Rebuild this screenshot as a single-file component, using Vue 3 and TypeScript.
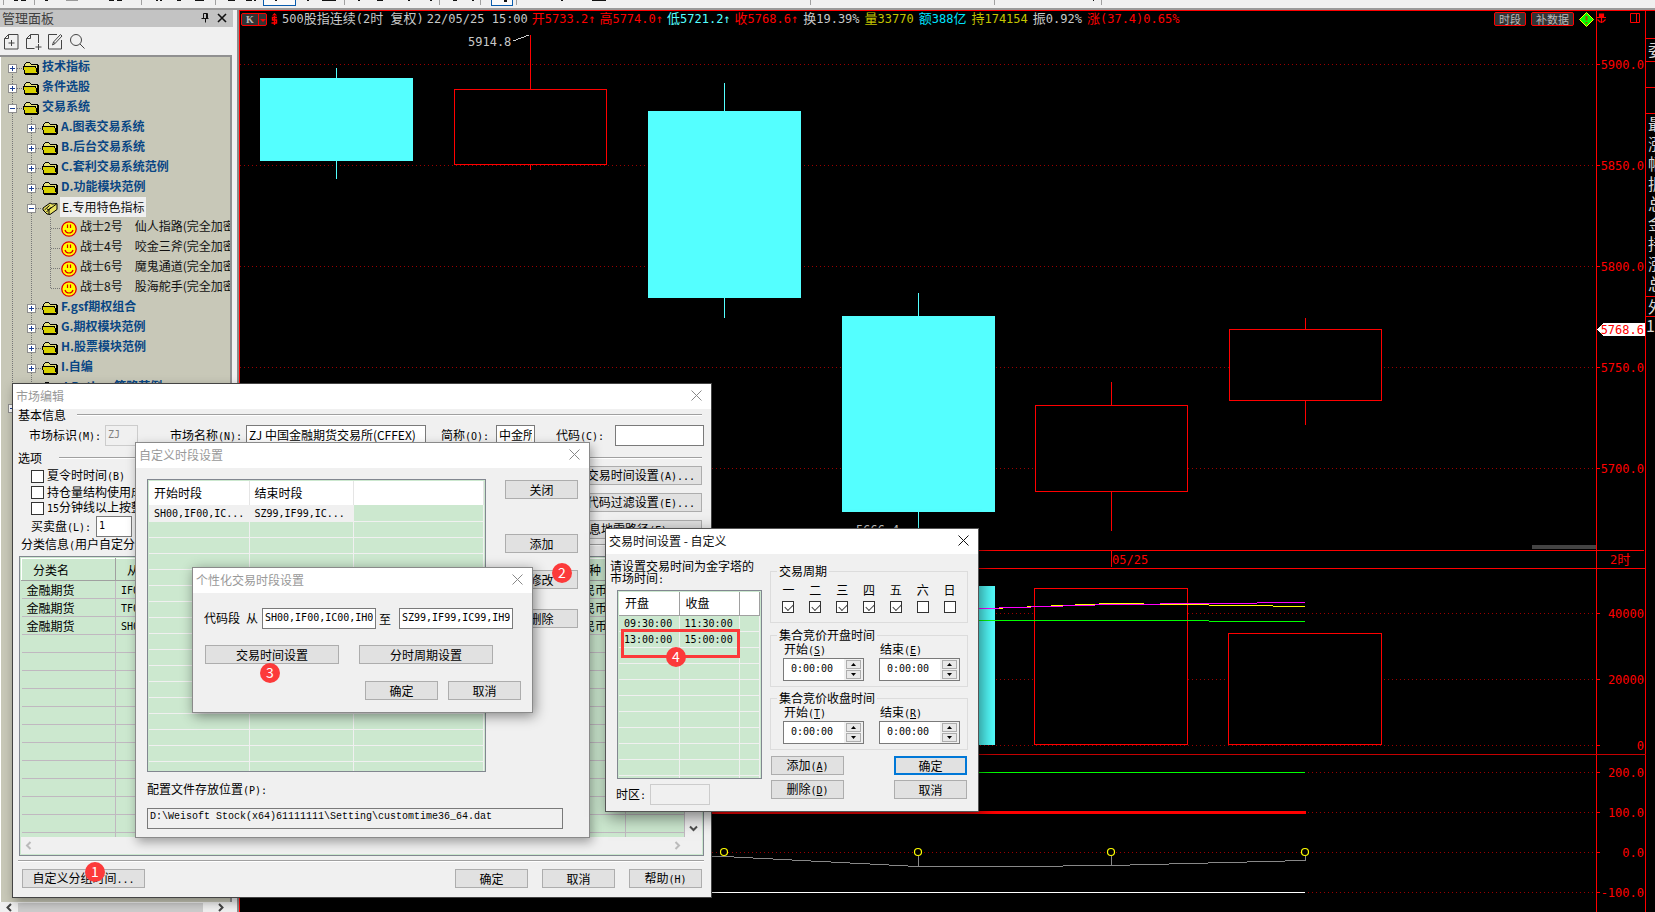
<script setup lang="ts">
import { h, type VNode } from 'vue'

/* Label text: Latin runs go to the half-width face, "&X" underlines the access key. */
const T = (props: { t: string }) => {
  const parts = props.t.match(/[\x20-\x7e↑]+|[^\x20-\x7e↑]+/g) ?? []
  return h(
    'span',
    { class: 'mix' },
    parts.map((part): VNode | string => {
      if (!/^[\x20-\x7e↑]/.test(part)) return part
      const bits = part.split(/(&[A-Z])/).filter(Boolean)
      return h('span', { class: 'half' }, bits.map((b) => (b[0] === '&' ? h('u', b[1]) : b)))
    }),
  )
}

interface Node {
  level: number
  kind: 'folder' | 'open' | 'leaf'
  sign?: '+' | '-'
  text: string
  extra?: string
  last?: boolean
}
const tree: Node[] = [
  { level: 0, kind: 'folder', sign: '+', text: '技术指标' },
  { level: 0, kind: 'folder', sign: '+', text: '条件选股' },
  { level: 0, kind: 'folder', sign: '-', text: '交易系统' },
  { level: 1, kind: 'folder', sign: '+', text: 'A.图表交易系统' },
  { level: 1, kind: 'folder', sign: '+', text: 'B.后台交易系统' },
  { level: 1, kind: 'folder', sign: '+', text: 'C.套利交易系统范例' },
  { level: 1, kind: 'folder', sign: '+', text: 'D.功能模块范例' },
  { level: 1, kind: 'open', sign: '-', text: 'E.专用特色指标' },
  { level: 2, kind: 'leaf', text: '战士2号', extra: '仙人指路(完全加密)' },
  { level: 2, kind: 'leaf', text: '战士4号', extra: '咬金三斧(完全加密)' },
  { level: 2, kind: 'leaf', text: '战士6号', extra: '魔鬼通道(完全加密)' },
  { level: 2, kind: 'leaf', text: '战士8号', extra: '股海舵手(完全加密)', last: true },
  { level: 1, kind: 'folder', sign: '+', text: 'F.gsf期权组合' },
  { level: 1, kind: 'folder', sign: '+', text: 'G.期权模块范例' },
  { level: 1, kind: 'folder', sign: '+', text: 'H.股票模块范例' },
  { level: 1, kind: 'folder', sign: '+', text: 'I.自编' },
  { level: 1, kind: 'folder', sign: '+', text: 'J.Python策略范例', last: true },
  { level: 0, kind: 'folder', sign: '+', text: '' },
]

const quotes = [
  { t: '500股指连续(2时 复权)', c: 'grey wide' },
  { t: '22/05/25 15:00', c: 'grey' },
  { t: '开5733.2↑', c: 'red' },
  { t: '高5774.0↑', c: 'red' },
  { t: '低5721.2↑', c: 'cyan' },
  { t: '收5768.6↑', c: 'red' },
  { t: '换19.39%', c: 'grey' },
  { t: '量33770', c: 'gold' },
  { t: '额388亿', c: 'aqua' },
  { t: '持174154', c: 'gold' },
  { t: '振0.92%', c: 'grey' },
  { t: '涨(37.4)0.65%', c: 'red' },
]

const ticks = [
  { y: 64, t: '5900.0' },
  { y: 165, t: '5850.0' },
  { y: 266, t: '5800.0' },
  { y: 367, t: '5750.0' },
  { y: 468, t: '5700.0' },
  { y: 613, t: '40000' },
  { y: 679, t: '20000' },
  { y: 745, t: '0' },
  { y: 772, t: '200.0' },
  { y: 812, t: '100.0' },
  { y: 852, t: '0.0' },
  { y: 892, t: '-100.0' },
]
const candles = [
  { x: 260, top: 78, bottom: 161, high: 68, low: 179, up: false },
  { x: 454, top: 89, bottom: 165, high: 35, low: 170, up: true },
  { x: 648, top: 111, bottom: 298, high: 83, low: 318, up: false },
  { x: 842, top: 316, bottom: 512, high: 293, low: 529, up: false },
  { x: 1035, top: 405, bottom: 492, high: 382, low: 531, up: true },
  { x: 1229, top: 329, bottom: 401, high: 318, low: 425, up: true },
]
const volumes = [
  { x: 842, top: 586, w: 153, up: false },
  { x: 1034, top: 588, w: 154, up: true },
  { x: 1228, top: 633, w: 154, up: true },
]
const rings = [724, 918, 1111, 1305]
const side = ['最', '涨', '幅', '振', '总', '金', '持', '涨', '总']

const toolSeps = [3, 34, 141, 215, 439, 480, 516, 810, 994, 1101, 344]
const toolBits = [
  [14, 4], [21, 5], [45, 3], [109, 5], [117, 5], [156, 2], [160, 2], [177, 4], [195, 9],
  [228, 7], [246, 6], [254, 2], [307, 2], [322, 14], [358, 2], [377, 6], [408, 2],
  [430, 2], [453, 4], [472, 2], [561, 2], [592, 14], [1093, 1],
]

const marketCols = ['94px', '60px', '60px', '60px', '80px', '70px', '60px', '60px', '60px', 'auto']
const marketHead = ['分类名', '从', '到', '', '', '', '', '', '币种', '']
const marketRows = [
  ['金融期货', 'IF00', '', '', '', '', '', '', '人民币', ''],
  ['金融期货', 'TF00', '', '', '', '', '', '', '人民币', ''],
  ['金融期货', 'SH00', '', '', '', '', '', '', '人民币', ''],
  ...Array.from({ length: 12 }, () => Array<string>(10).fill('')),
]
const options = ['夏令时时间(B)', '持仓量结构使用成交量', '15分钟线以上按整点']
const days = ['一', '二', '三', '四', '五', '六', '日']
const auctions = [
  { title: '集合竞价开盘时间', from: '开始(&S)', to: '结束(&E)', id: 'open' },
  { title: '集合竞价收盘时间', from: '开始(&T)', to: '结束(&R)', id: 'close' },
]
const sessions = [['09:30:00', '11:30:00'], ['13:00:00', '15:00:00'], ...Array.from({ length: 9 }, () => ['', ''])]
</script>

<template>
  <div class="app">
    <div class="toolbar">
      <svg width="1655" height="8" shape-rendering="crispEdges" aria-hidden="true">
        <rect v-for="x in toolSeps" :key="'s' + x" :x="x" y="0" width="1" height="5" fill="#a0a0a0" />
        <rect v-for="b in toolBits" :key="'b' + b[0]" :x="b[0]" y="0" :width="b[1]" height="1" fill="#111" />
        <rect x="66" y="0" width="12" height="1" fill="#999" />
        <path d="M263.5 0V5.5H295.5V0M491.5 0V5.5H512.5V0" fill="#fafafa" stroke="#0a5cad" />
        <rect x="275" width="2" height="1" fill="#111" /><rect x="504" width="3" height="2" fill="#111" />
      </svg>
    </div>

    <div class="workspace">
      <aside class="panel">
        <header class="panel-title">
          <span>管理面板</span>
          <svg width="26" height="10" viewBox="0 0 26 10" fill="none" aria-hidden="true">
            <path d="M2.5 0.500h4v5M2.500 .5v5M5.500 .5v5M0.500 5.500h7M4.500 5.500v4" stroke="#111" />
            <path d="M17 1l8 8M25 1l-8 8" stroke="#111" stroke-width="1.600" />
          </svg>
        </header>
        <div class="panel-tools">
          <button aria-label="新建">
            <svg width="15" height="16" viewBox="0 0 15 16"><path d="M4.500.5h9.500v14.500H.5V4.500zM4.500.5v4h-4M7.500 6v6M4.500 9h6" /></svg>
          </button>
          <button aria-label="导入">
            <svg width="15" height="16" viewBox="0 0 15 16"><path d="M12.500 9V.5h-8l-4 4v10h8M4.500.5v4h-4M12.500 10v6M9.500 13h6" /></svg>
          </button>
          <button aria-label="编辑">
            <svg width="15" height="16" viewBox="0 0 15 16"><path d="M9 .5H.5v14.500h13V6M4.500 11l1-3 7-7.500 1.500 1.500-7 7.500zM5.500 8l1.500 1.500" /></svg>
          </button>
          <button aria-label="搜索">
            <svg width="15" height="16" viewBox="0 0 15 16"><circle cx="6" cy="6" r="5.500" /><path d="M10 10l4.500 4.500" /></svg>
          </button>
        </div>
        <div class="tree">
          <div v-for="(n, i) in tree" :key="i" class="node" :class="n.kind">
            <svg v-for="c in n.level + 1" :key="c" class="cell" width="19" height="20" viewBox="0 0 19 20" shape-rendering="crispEdges" aria-hidden="true">
              <path
                :d="c <= n.level ? 'M9.500 0V20' : (i === 0 ? 'M9.500 11V20' : n.last ? 'M9.500 0V11' : 'M9.500 0V20') + 'M10 11.500H19'"
                stroke="#777" stroke-dasharray="1 1"
              />
              <template v-if="c === n.level + 1 && n.sign">
                <rect x="5.500" y="7.500" width="8" height="8" fill="#fff" stroke="#8f8f8f" />
                <path :d="n.sign === '+' ? 'M7 11.500h5M9.500 9v5' : 'M7 11.500h5'" stroke="#1c3f94" />
              </template>
            </svg>
            <svg v-if="n.kind === 'folder'" class="glyph" width="16" height="13" viewBox="0 0 16 13" shape-rendering="crispEdges" aria-hidden="true">
              <path d="M1.500 11V2.500L3.500 .5H6.500L8.500 2.500H14.500V11.500" fill="#e6e27a" stroke="#000" />
              <path d="M.5 4.500H12.500L14.500 11.500H1.500z" fill="#d6d000" stroke="#000" />
              <path d="M15 3v9M2 12h13" stroke="#000" />
            </svg>
            <svg v-else-if="n.kind === 'open'" class="glyph" width="16" height="14" viewBox="0 0 16 14" aria-hidden="true">
              <path d="M1 6l7-5 2 1 5-.5v6L8 12.500 5 12 1 8z" fill="#e8e060" stroke="#000" />
              <path d="M2.500 8l5-4.500M4.500 10l5-5M7 12V7.500l7.500-5.500M5 7l2 1" fill="none" stroke="#000" />
            </svg>
            <svg v-else class="glyph" width="16" height="16" viewBox="0 0 16 16" aria-hidden="true">
              <circle cx="8" cy="8" r="7.200" fill="#ff0" stroke="#e00000" stroke-width="1.300" />
              <path d="M6.500 3.500v3.500M9.500 3.500v3.500M4 9c1 4 7 4 8 0" fill="none" stroke="#e00000" stroke-width="1.200" />
            </svg>
            <span class="name">{{ n.text }}</span>
            <span v-if="n.extra" class="extra">{{ n.extra }}</span>
          </div>
        </div>
        <div class="panel-scroll">
          <svg width="6" height="9" viewBox="0 0 6 9"><path d="M5 1L1.500 4.500 5 8" /></svg>
          <i class="thumb"></i>
          <svg width="6" height="9" viewBox="0 0 6 9"><path d="M1 1l3.500 3.500L1 8" /></svg>
        </div>
      </aside>

      <main class="chart">
        <svg class="plot" viewBox="240 11 1406 901" preserveAspectRatio="xMinYMin slice" shape-rendering="crispEdges">
          <g stroke="#9a0000" stroke-dasharray="1 3">
            <path v-for="k in ticks" :key="k.t" :d="`M240 ${k.y}.500H1594`" />
          </g>
          <path d="M1596.500 11V912M1645.500 11V912M239 550.500H1644M239 568.500H1646M1111.500 551V567" stroke="#f00" />
          <path d="M239 754.500H1646" stroke="#c40000" />
          <path v-for="k in ticks" :key="k.t" :d="`M1597 ${k.y}.500h3`" stroke="#f00" />
          <g v-for="c in candles" :key="c.x">
            <path :d="`M${c.x + 76}.500 ${c.high}V${c.top}M${c.x + 76}.500 ${c.bottom}V${c.low}`" :stroke="c.up ? '#f00' : '#54ffff'" />
            <rect v-if="c.up" :x="c.x + 0.5" :y="c.top + 0.5" width="152" :height="c.bottom - c.top - 1" fill="#000" stroke="#f00" />
            <rect v-else :x="c.x" :y="c.top" width="153" :height="c.bottom - c.top" fill="#54ffff" />
          </g>
          <rect
            v-for="v in volumes" :key="v.x"
            :x="v.up ? v.x + 0.5 : v.x" :y="v.up ? v.top + 0.5 : v.top"
            :width="v.up ? v.w - 1 : v.w" :height="745 - v.top - (v.up ? 1 : 0)"
            :fill="v.up ? '#000' : '#54ffff'" :stroke="v.up ? '#f00' : 'none'"
          />
          <g fill="none">
            <path d="M995 608.500h8M1027 606.500h4M1051 605.500h12M1075 604.500h20M1099 603.500h45M1160 604.500h49M1209 605.500h64M1273 606.500h32" stroke="#ff0" />
            <path d="M842 608.500h157M999 607.500h32M1031 606.500h32M1063 605.500h32M1095 604.500h65M1160 603.500h97M1257 602.500h48" stroke="#f0f" />
            <path d="M842 620.500H1209M1209 621.500H1305M700 772.500H1305" stroke="#0f0" />
            <path d="M700 812.500H1306" stroke="#f00" stroke-width="3" />
            <path d="M700 892.500H1305" stroke="#fff" />
            <path d="M700 855.500L724 856.500 918 866.500H1015L1111 865.500 1305 860.500V856M918.500 856V866M1111.500 856V865" stroke="#888" />
            <ellipse v-for="x in rings" :key="x" :cx="x" cy="852" rx="3.500" ry="3.500" fill="#000" stroke="#ff0" stroke-width="1.200" shape-rendering="auto" />
            <path d="M513 41L529 35" stroke="#ccc" />
          </g>
          <rect x="1532" y="545" width="64" height="4" fill="#444" />
          <path d="M1597 329.500L1603 323H1645V336H1603z" fill="#fff" />
          <g class="num" text-anchor="end">
            <text v-for="k in ticks" :key="k.t" x="1644" :y="k.y + 5">{{ k.t }}</text>
            <text x="1644" y="334">5768.6</text>
          </g>
          <g class="num">
            <text x="1112" y="564">05/25</text>
            <text x="1610" y="564">2<tspan class="han">时</tspan></text>
            <text x="468" y="46" class="pale">5914.8</text>
            <text x="856" y="534" class="pale">5666.4</text>
          </g>
        </svg>
        <header class="quote-bar">
          <button class="mode" aria-label="K线">
            <b>K</b>
            <svg width="8" height="11" viewBox="0 0 8 11"><path d="M.5 0v11" stroke="#f00" /><path d="M2 5h6L5 8z" fill="#f00" /></svg>
          </button>
          <svg class="money" width="7" height="12" viewBox="0 0 7 12" aria-hidden="true">
            <path d="M1 2.500L3.500 0 6 2.500z" fill="#f00" /><path d="M6 4.500H1.500v2.500h4v3H.5M3.500 3v9" fill="none" stroke="#f00" stroke-width="1.400" />
          </svg>
          <span v-for="q in quotes" :key="q.t" class="quote" :class="q.c"><T :t="q.t" /></span>
          <button class="chip first">时段</button>
          <button class="chip">补数据</button>
          <svg class="corner" width="62" height="15" viewBox="0 0 62 15" aria-hidden="true">
            <path d="M7.500.5l7 7-7 7-7-7z" fill="#0f0" stroke="#ff0" /><path d="M7.500 4v4.500M7.500 10v1.500" stroke="#a05000" stroke-width="2" />
            <path d="M20.500 2h4v3h-4zM22.500 4v7" fill="#f00" stroke="#f00" stroke-width="1.200" />
            <path d="M18 5.500h9M18.500 7.500l2.500 2.500h3l2.500-2.500" fill="none" stroke="#f00" stroke-width="1.200" />
            <path d="M51.500 1.500h9v9h-9zM57.500 1v9" fill="none" stroke="#f00" />
          </svg>
        </header>
      </main>

      <aside class="depth">
        <div class="blank"></div>
        <div class="one">委</div>
        <div class="gap"></div>
        <div class="gap"></div>
        <div class="many"><span v-for="(s, i) in side" :key="i">{{ s }}</span></div>
        <div class="one low">外</div>
        <div class="count">1</div>
      </aside>
    </div>

    <section class="dialog market" aria-label="市场编辑">
      <header class="bar"><span>市场编辑</span>
        <button class="x" aria-label="关闭"><svg width="11" height="11" viewBox="0 0 11 11"><path d="M.5.5l10 10M10.500.5l-10 10" /></svg></button>
      </header>
      <div class="market-body">
        <div class="rule-head"><T t="基本信息" /><i></i></div>
        <div class="ident">
          <label for="m-id"><T t="市场标识(M):" /></label>
          <input id="m-id" class="w-id half" value="ZJ" disabled />
          <label for="m-name" class="after-id"><T t="市场名称(N):" /></label>
          <input id="m-name" class="w-name" value="ZJ 中国金融期货交易所(CFFEX)" />
          <label for="m-short" class="after-name"><T t="简称(O):" /></label>
          <input id="m-short" class="w-short" value="中金所" />
          <label for="m-code" class="after-short"><T t="代码(C):" /></label>
          <input id="m-code" class="w-code" value="" />
        </div>
        <div class="rule-head second"><T t="选项" /><i></i></div>
        <div class="middle">
          <div class="opts">
            <label v-for="o in options" :key="o"><input type="checkbox" /><T :t="o" /></label>
            <div class="lots"><label for="m-lot"><T t="买卖盘(L):" /></label><input id="m-lot" class="half" value="1" /></div>
          </div>
          <div class="side-btns">
            <button class="btn"><T t="交易时间设置(A)..." /></button>
            <button class="btn"><T t="代码过滤设置(E)..." /></button>
            <button class="btn inset"><T t="信息地雷路径(F)" /></button>
          </div>
        </div>
        <div class="rule-head third"><T t="分类信息(用户自定分类)" /><i></i></div>
        <div class="market-grid">
          <div class="view">
            <div class="clip">
              <table>
                <colgroup><col v-for="(w, i) in marketCols" :key="i" :style="{ width: w }" /></colgroup>
                <thead><tr><th v-for="(c, i) in marketHead" :key="i">{{ c }}</th></tr></thead>
                <tbody><tr v-for="(r, i) in marketRows" :key="i"><td v-for="(c, j) in r" :key="j"><T :t="c" /></td></tr></tbody>
              </table>
            </div>
            <div class="vbar"><svg width="9" height="7" viewBox="0 0 9 7"><path d="M1 1.500L4.500 5 8 1.500" /></svg></div>
          </div>
          <div class="hbar">
            <svg width="7" height="9" viewBox="0 0 7 9"><path d="M5.500 1L2 4.500 5.500 8" /></svg>
            <svg width="7" height="9" viewBox="0 0 7 9"><path d="M1.500 1L5 4.500 1.500 8" /></svg>
          </div>
        </div>
        <hr />
        <footer>
          <button class="btn group"><T t="自定义分组时间..." /></button>
          <button class="btn">确定</button>
          <button class="btn">取消</button>
          <button class="btn"><T t="帮助(H)" /></button>
        </footer>
      </div>
      <span class="badge n1">1</span>
    </section>

    <section class="dialog slots" aria-label="自定义时段设置">
      <header class="bar"><span>自定义时段设置</span>
        <button class="x" aria-label="关闭"><svg width="11" height="11" viewBox="0 0 11 11"><path d="M.5.5l10 10M10.500.5l-10 10" /></svg></button>
      </header>
      <div class="slots-body">
        <div class="slot-list">
          <table>
            <colgroup><col class="c1" /><col class="c2" /><col /></colgroup>
            <thead><tr><th>开始时段</th><th>结束时段</th><th></th></tr></thead>
            <tbody>
              <tr class="sel"><td><T t="SH00,IF00,IC..." /></td><td><T t="SZ99,IF99,IC..." /></td><td></td></tr>
              <tr v-for="i in 17" :key="i"><td></td><td></td><td></td></tr>
            </tbody>
          </table>
        </div>
        <div class="slot-btns">
          <button class="btn">关闭</button>
          <button class="btn add">添加</button>
          <button class="btn edit">修改</button>
          <button class="btn del">删除</button>
        </div>
      </div>
      <div class="path">
        <label for="cfg"><T t="配置文件存放位置(P):" /></label>
        <input id="cfg" readonly value="D:\Weisoft Stock(x64)61111111\Setting\customtime36_64.dat" />
      </div>
      <span class="badge n2">2</span>
    </section>

    <section class="dialog custom" aria-label="个性化交易时段设置">
      <header class="bar"><span>个性化交易时段设置</span>
        <button class="x" aria-label="关闭"><svg width="11" height="11" viewBox="0 0 11 11"><path d="M.5.5l10 10M10.500.5l-10 10" /></svg></button>
      </header>
      <div class="range">
        <label for="r1"><T t="代码段 从" /></label><input id="r1" class="half" value="SH00,IF00,IC00,IH00" />
        <label for="r2" class="to">至</label><input id="r2" class="half" value="SZ99,IF99,IC99,IH99" />
      </div>
      <div class="pair"><button class="btn">交易时间设置</button><button class="btn">分时周期设置</button></div>
      <div class="confirm"><button class="btn">确定</button><button class="btn">取消</button></div>
      <span class="badge n3">3</span>
    </section>

    <section class="dialog hours" aria-label="交易时间设置">
      <header class="bar"><span>交易时间设置 - 自定义</span>
        <button class="x" aria-label="关闭"><svg width="11" height="11" viewBox="0 0 11 11"><path d="M.5.5l10 10M10.500.5l-10 10" /></svg></button>
      </header>
      <div class="hours-body">
        <div class="left">
          <p>请设置交易时间为金字塔的<br /><T t="市场时间:" /></p>
          <div class="hour-list">
            <table>
              <colgroup><col class="c1" /><col class="c2" /><col /></colgroup>
              <thead><tr><th>开盘</th><th>收盘</th><th></th></tr></thead>
              <tbody><tr v-for="(s, i) in sessions" :key="i"><td><T :t="s[0]" /></td><td><T :t="s[1]" /></td><td></td></tr></tbody>
            </table>
          </div>
          <div class="zone"><label for="tz"><T t="时区:" /></label><input id="tz" disabled /></div>
        </div>
        <div class="right">
          <fieldset class="week">
            <legend>交易周期</legend>
            <div class="days">
              <label v-for="(d, i) in days" :key="d">{{ d }}<input type="checkbox" :checked="i < 5" /></label>
            </div>
          </fieldset>
          <fieldset v-for="a in auctions" :key="a.id" :class="a.id">
            <legend>{{ a.title }}</legend>
            <div class="times">
              <div v-for="(l, i) in [a.from, a.to]" :key="l">
                <label :for="a.id + i"><T :t="l" /></label>
                <div class="spin">
                  <input :id="a.id + i" class="half" value="0:00:00" />
                  <div class="arrows">
                    <button aria-label="增加"><svg width="5" height="3"><path d="M0 3h5L2.500 0z" /></svg></button>
                    <button aria-label="减少"><svg width="5" height="3"><path d="M0 0h5L2.500 3z" /></svg></button>
                  </div>
                </div>
              </div>
            </div>
          </fieldset>
          <div class="acts">
            <button class="btn"><T t="添加(&A)" /></button><button class="btn primary">确定</button>
            <button class="btn"><T t="删除(&D)" /></button><button class="btn">取消</button>
          </div>
        </div>
      </div>
      <i class="mark"></i>
      <span class="badge n4">4</span>
    </section>
  </div>
</template>

<style>
body { margin: 0; background: #000; }
.mix { white-space: pre; }
.half, .mix .half { font-family: "DejaVu Sans Mono", "Noto Sans CJK SC", monospace; font-size: 10px; }
.quote .mix .half { font-size: 12px; }
</style>

<style scoped>
.app { position: relative; display: flex; flex-direction: column; height: 100vh; overflow: hidden; font: 12px/12px "Noto Sans CJK SC", sans-serif; color: #000; }
.app * { box-sizing: border-box; }
button, input { font: inherit; color: inherit; margin: 0; padding: 0; border: 0; background: none; border-radius: 0; }
svg { display: block; flex: none; }
.toolbar { height: 10px; flex: none; overflow: hidden; background: #f0f0f0; border-bottom: 2px solid #9a9a9a; }
.workspace { flex: 1; min-height: 0; display: flex; }

.panel { width: 239px; flex: none; display: flex; flex-direction: column; background: #f0f0f0; border-right: 2px solid #8c8c8c; }
.panel-title { display: flex; justify-content: space-between; align-items: center; width: 233px; height: 17px; padding: 0 6px 1px 2px; background: #c3c3c3; color: #404040; font-size: 13px; flex: none; }
.panel-tools { display: flex; gap: 7px; align-items: center; height: 28px; padding: 1px 0 0 4px; flex: none; }
.panel-tools svg { fill: none; stroke: #444; overflow: visible; }
.tree { flex: 1; min-height: 0; width: 232px; overflow: hidden; padding-left: 3px; background: #c8c8b8; border: solid #909090; border-width: 2px 2px 0 0; box-shadow: inset 1px 0 #fff; }
.node { display: flex; align-items: center; height: 20px; white-space: nowrap; color: #0a4684; font-weight: 700; }
.glyph { margin: 3px 2px 0 1px; }
.name, .extra { padding: 0 1px 2px; }
.node.leaf { color: #111; font-weight: 400; }
.extra { margin-left: 10px; }
.node.open .name { align-self: stretch; line-height: 19px; padding: 0 2px; background: #f0f0f0; color: #111; font-weight: 400; }
.panel-scroll { display: flex; align-items: center; gap: 6px; height: 10px; padding: 1px 0 0 6px; flex: none; }
.panel-scroll svg { fill: none; stroke: #444; stroke-width: 2; }
.thumb { width: 185px; height: 9px; background: #cdcdcd; margin-right: 9px; }

.chart { flex: 1; min-width: 0; display: grid; background: #000; border: solid #f00; border-width: 1px 0 0 1px; }
.plot { grid-area: 1 / 1; width: 100%; height: 100%; min-height: 0; }
.num { font: 12px "DejaVu Sans Mono", monospace; fill: #f00; }
.num .pale { fill: #c8c8c8; }
.num .han { font: 13px "Noto Sans CJK SC", sans-serif; }
.quote-bar { grid-area: 1 / 1; align-self: start; display: flex; align-items: center; height: 16px; padding-left: 1px; font-size: 13px; white-space: nowrap; z-index: 1; }
.mode { display: flex; align-items: center; justify-content: space-between; width: 26px; height: 13px; padding-left: 4px; border: 1px solid #f00; border-radius: 2px; background: #333; color: #bbb; font: 700 10px "Liberation Serif", serif; }
.money { margin: 0 4px; }
.quote { margin-right: 4px; padding-bottom: 1px; }
.quote.wide { margin-right: 3px; }
.quote:nth-of-type(n + 6) { margin-right: 5px; }
.grey { color: #c8c8c8; } .red { color: #f00; } .cyan { color: #54ffff; } .gold { color: #c4c400; } .aqua { color: #00e4ff; }
.chip { height: 14px; padding: 0 4px; margin-right: 5px; border: 1px solid #f00; border-radius: 2px; background: #333; color: #bbb; font-size: 11px; line-height: 11px; }
.chip.first { margin-left: auto; }
.corner { margin: 0 5px 0 0; }
.depth { width: 9px; flex: none; overflow: hidden; background: #000; color: #d8d8d8; border-top: 1px solid #f00; font-size: 16px; }
.depth div { border-bottom: 1px solid #f00; padding-left: 2px; }
.depth .blank { height: 28px; }
.depth .one { height: 23px; line-height: 20px; }
.depth .gap { height: 26px; }
.depth .many { height: 183px; display: flex; flex-direction: column; }
.many span { line-height: 18px; height: 20px; }
.depth .one.low { height: 20px; line-height: 18px; }
.depth .count { border: 0; line-height: 16px; padding: 0; }

.dialog { position: absolute; display: flex; flex-direction: column; background: #f0f0f0; border: 1px solid #8a8a8a; box-shadow: 2px 4px 10px rgba(0, 0, 0, 0.35); }
.bar { display: flex; align-items: center; justify-content: space-between; height: 25px; flex: none; padding: 0 9px 2px 3px; background: #fff; color: #999; }
.x svg { fill: none; stroke: #888; }
.btn { height: 19px; width: 73px; border: 1px solid #adadad; background: #e1e1e1; line-height: 15px; white-space: nowrap; }
.dialog input:not([type="checkbox"]) { height: 21px; padding: 0 2px 2px; border: 1px solid #7a7a7a; background: #fff; line-height: normal; min-width: 0; }
.dialog input:disabled { background: #f0f0f0; border-color: #ccc; color: #808080; }
input[type="checkbox"] { appearance: none; width: 13px; height: 13px; border: 1px solid #333; background: #fff; }
input[type="checkbox"]:checked::after { content: ""; display: block; width: 7px; height: 4px; margin: 2px 0 0 2px; border: solid #444; border-width: 0 0 1px 1px; transform: rotate(-45deg); }
.dialog input.half { font-family: "DejaVu Sans Mono", monospace; font-size: 10px; }
.badge { position: absolute; width: 20px; height: 20px; border-radius: 50%; background: #fc3a3a; color: #fff; font-size: 14px; line-height: 19px; text-align: center; }
table { width: 100%; table-layout: fixed; border-collapse: collapse; }
th, td { padding: 0; font-weight: 400; text-align: left; white-space: nowrap; overflow: hidden; }

.market { left: 12px; top: 383px; width: 700px; height: 515px; border-color: #444; }
.market-body { flex: 1; display: flex; flex-direction: column; padding: 0 7px 0 5px; }
.rule-head { display: flex; align-items: center; height: 12px; }
.rule-head i { flex: 1; height: 2px; margin: 0 2px 0 11px; background: #a0a0a0; border-bottom: 1px solid #fff; }
.rule-head.second { margin-top: 6px; }
.rule-head.second i { margin-left: 17px; }
.rule-head.third { padding-left: 3px; }
.ident { display: flex; align-items: center; margin-top: 4px; padding-left: 11px; }
.ident label { flex: none; width: 76px; }
.ident .w-id { width: 33px; }
.ident .after-id { margin-left: 32px; }
.ident .w-name { width: 180px; }
.ident .after-name { margin-left: 15px; width: 55px; }
.ident .w-short { width: 39px; }
.ident .after-short { margin-left: 21px; width: 59px; }
.ident .w-code { flex: 1; }
.middle { display: flex; justify-content: space-between; margin: 2px 2px 0 13px; }
.opts { padding-top: 2px; }
.opts label { display: flex; align-items: center; gap: 3px; height: 16px; }
.lots { display: flex; align-items: center; gap: 5px; height: 21px; }
.lots input { width: 36px; }
.side-btns { display: flex; flex-direction: column; gap: 8px; }
.side-btns .btn { width: 142px; text-align: right; padding-right: 6px; }
.side-btns .inset { padding-right: 34px; }
.market-grid { height: 300px; margin: 5px 0 0 1px; display: flex; flex-direction: column; border: 1px solid #828790; background: #cce8cf; padding: 1px; }
.view { flex: 1; min-height: 0; display: flex; }
.clip { flex: 1; min-width: 0; overflow: hidden; }
.market-grid th { height: 22px; padding-left: 11px; border: solid; border-width: 1px; border-color: #fff #a0a0a0 #a0a0a0 #fff; }
.market-grid td { height: 18px; padding-left: 5px; border: solid #c0b8c0; border-width: 0 1px 1px 0; }
.vbar { width: 17px; background: #f0f0f0; display: flex; align-items: flex-end; justify-content: center; padding-bottom: 5px; }
.vbar svg, .hbar svg { fill: none; stroke: #505050; stroke-width: 2; }
.hbar { height: 17px; display: flex; align-items: center; justify-content: space-between; padding: 0 21px 0 4px; background: #f0f0f0; }
.hbar svg { stroke: #bbb; }
.market hr { width: 100%; height: 2px; margin: 4px 0 0; border: 0; background: #a0a0a0; border-bottom: 1px solid #fff; }
.market footer { display: flex; gap: 14px; margin: 7px 2px 0 4px; }
.market .group { width: 123px; margin-right: auto; }
.n1 { left: 72px; top: 478px; }

.slots { left: 135px; top: 442px; width: 455px; height: 396px; }
.slots-body { display: flex; justify-content: space-between; padding: 11px 11px 0; }
.slot-list { width: 339px; height: 293px; overflow: hidden; border: 1px solid #828790; background: #cce8cf; padding: 1px; }
.slot-list .c1 { width: 100px; } .slot-list .c2 { width: 104px; }
.slot-list th { height: 24px; padding-left: 5px; background: #fff; border-right: 1px solid #e5e5e5; }
.slot-list td { height: 16px; padding-left: 5px; border: solid #f0f0f0; border-width: 0 1px 1px 0; }
.sel td:not(:last-child) { background: #f0f0f0; }
.slot-btns { display: flex; flex-direction: column; padding-top: 1px; }
.slot-btns .add { margin-top: 35px; }
.slot-btns .edit { margin-top: 17px; }
.slot-btns .del { margin-top: 20px; }
.path { display: flex; flex-direction: column; gap: 11px; padding: 11px 26px 0 11px; }
.dialog .path input { padding-bottom: 4px; background: #f0f0f0; font-family: "Liberation Mono", monospace; font-size: 10px; }
.n2 { left: 416px; top: 120px; }

.custom { left: 192px; top: 567px; width: 341px; height: 146px; box-shadow: 2px 3px 12px rgba(0, 0, 0, 0.45); }
.range { display: flex; align-items: center; gap: 3px; padding: 15px 0 0 11px; }
.range label { width: 55px; }
.range .to { width: 17px; }
.range input { width: 114px; }
.pair { display: flex; gap: 20px; padding: 16px 0 0 12px; }
.pair .btn { width: 134px; }
.confirm { display: flex; justify-content: flex-end; gap: 10px; padding: 17px 11px 0 0; }
.n3 { left: 67px; top: 95px; }

.hours { left: 605px; top: 528px; width: 374px; height: 284px; border-color: #555; box-shadow: 3px 5px 16px rgba(0, 0, 0, 0.5); }
.hours .bar { color: #111; }
.hours .bar .x svg { stroke: #111; }
.hours-body { display: flex; justify-content: space-between; padding: 6px 10px 0 4px; }
.left p { margin: 0 0 4px; }
.hour-list { width: 145px; height: 189px; margin-left: 7px; overflow: hidden; border: 1px solid #828790; background: #cce8cf; padding: 1px; }
.hour-list .c1 { width: 60px; } .hour-list .c2 { width: 60px; }
.hour-list th { height: 23px; padding: 0 0 1px 6px; background: #fff; border: solid #a0a0a0; border-width: 0 1px 1px 0; }
.hour-list td { height: 16px; padding-left: 5px; border: solid #f0f0f0; border-width: 0 1px 1px 0; }
.zone { display: flex; align-items: center; gap: 4px; margin: 5px 0 0 6px; }
.zone label { width: 30px; }
.zone input { width: 60px; }
.right { width: 198px; margin-top: 5px; }
fieldset { height: 58px; min-width: 0; margin: 0 0 5px; padding: 0; border: 1px solid #dcdcdc; }
fieldset.week { margin-bottom: 6px; }
legend { margin-left: 6px; padding: 0 2px; line-height: 12px; height: 12px; }
.days { display: flex; padding: 7px 4px 0; }
.days label { flex: 1; display: flex; flex-direction: column; align-items: center; gap: 5px; }
.days input { width: 12px; height: 12px; }
.times { display: flex; gap: 15px; padding: 2px 0 0 12px; }
.times label { display: block; height: 12px; margin: 0 0 3px 1px; }
.spin { display: flex; align-items: center; width: 81px; height: 23px; border: 1px solid #7a7a7a; background: #fff; }
.dialog .spin input { flex: 1; height: 19px; border: 0; padding-left: 7px; }
.arrows { display: flex; flex-direction: column; gap: 1px; padding: 1px 2px; background: #f0f0f0; }
.arrows button { display: flex; align-items: center; justify-content: center; width: 15px; height: 9px; background: #e8e8e8; border: 1px solid #adadad; }
.acts { display: grid; grid-template-columns: 1fr 73px; gap: 5px 0; padding: 1px 1px 0; }
.primary { border: 2px solid #0078d7; line-height: 13px; }
.mark { position: absolute; left: 15px; top: 100px; width: 119px; height: 29px; border: 3px solid #fc3a3a; }
.n4 { left: 60px; top: 118px; }
</style>
